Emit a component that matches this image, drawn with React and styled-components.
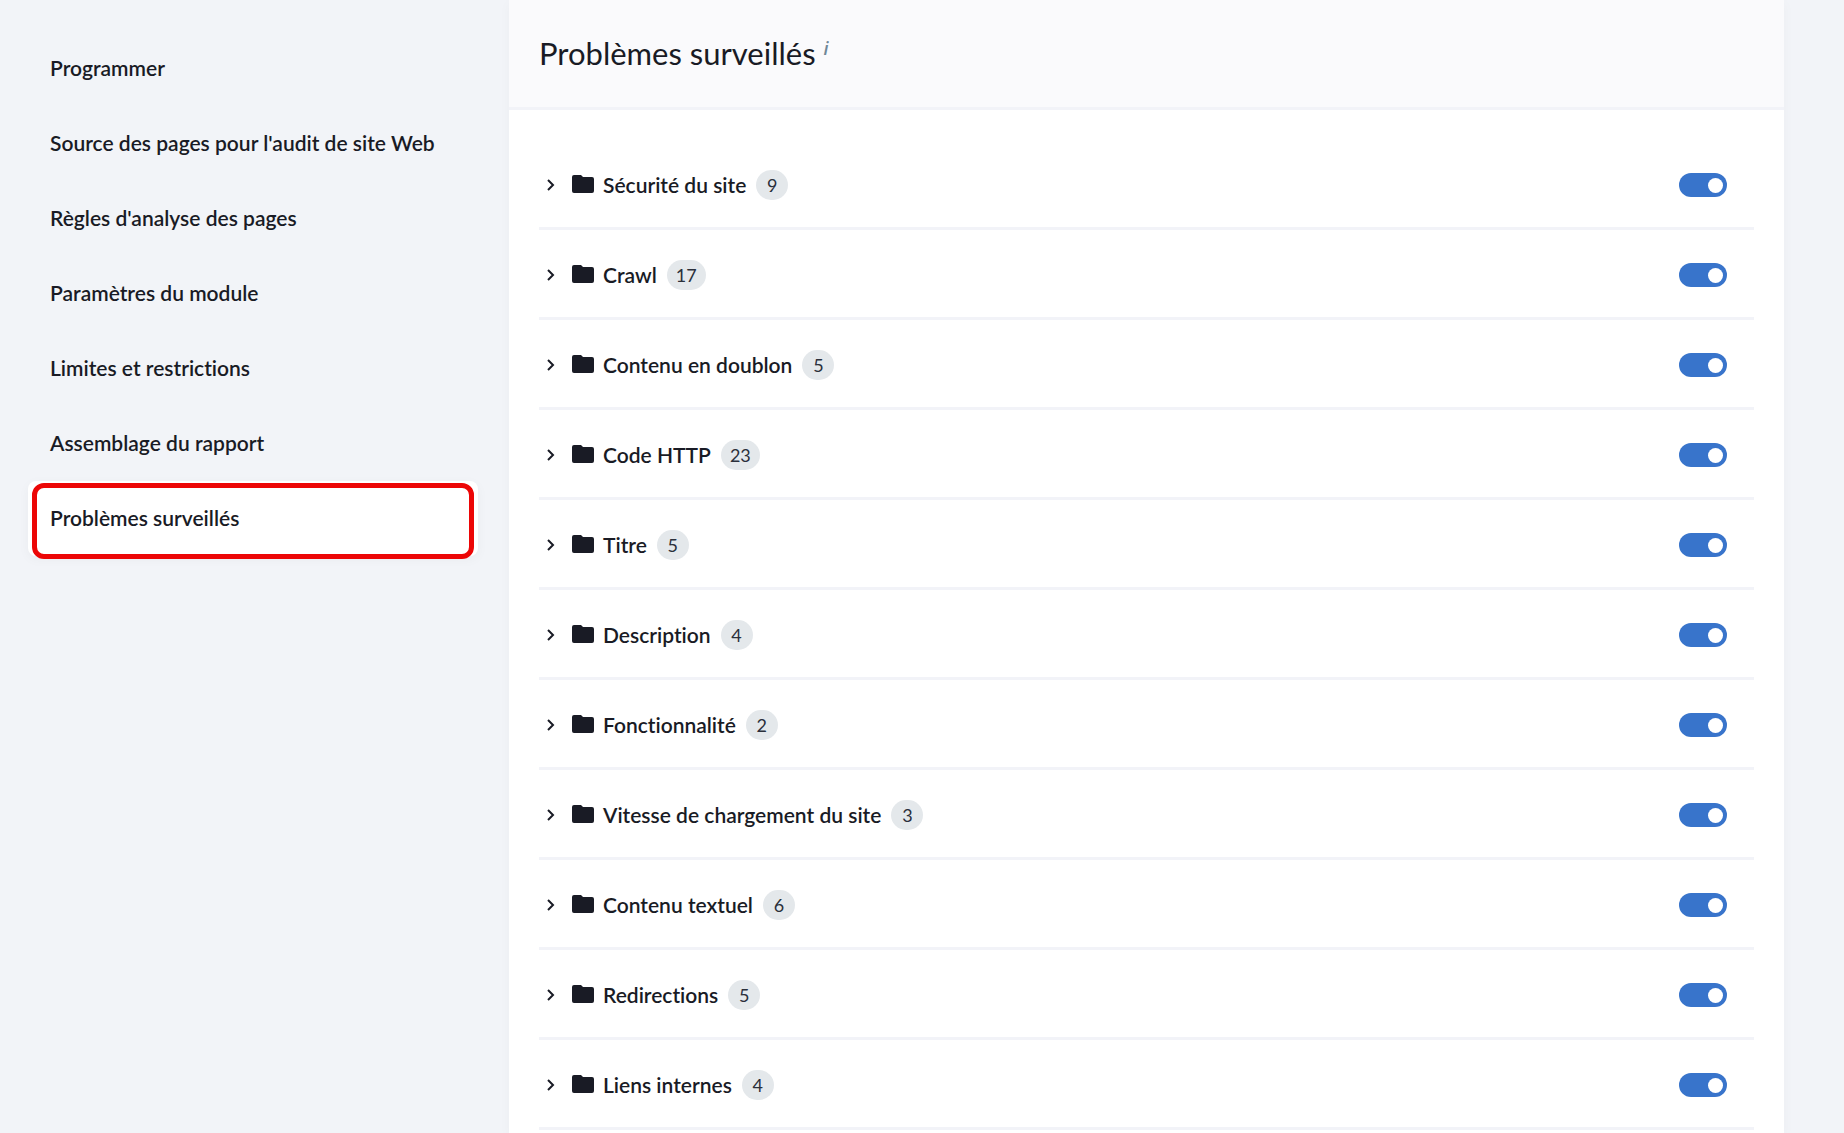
import React from "react";
import styled, { createGlobalStyle, css } from "styled-components";

const GlobalStyle = createGlobalStyle`
  *, *::before, *::after { box-sizing: border-box; }
  body {
    margin: 0;
    background: #f2f4f8;
    color: #191b25;
    font-family: Lato, "Noto Sans", sans-serif;
    font-size: 21px;
    font-variant-ligatures: none;
    line-height: 30px;
  }
`;

const Page = styled.div`
  display: flex;
  min-height: 100vh;
  padding-right: 60px;
`;

const Sidebar = styled.nav`
  flex: 0 0 509px;
  padding: 31px 31px 0 28px;
`;

const Menu = styled.ul`
  margin: 0;
  padding: 0;
  list-style: none;
`;

const MenuLink = styled.a`
  position: relative;
  display: flex;
  align-items: center;
  height: 75px;
  padding: 0 22px 2px;
  border-radius: 8px;
  color: inherit;
  font-weight: 600;
  text-decoration: none;

  ${({ $active }) =>
    $active &&
    css`
      background: #ffffff;
      box-shadow: 0 3px 12px rgba(25, 27, 37, 0.04);

      &::after {
        content: "";
        position: absolute;
        inset: 2px 4px -3px;
        border: 5px solid #ec0606;
        border-radius: 12px;
      }
    `}
`;

const Panel = styled.main`
  flex: 1;
  min-width: 0;
  background: #ffffff;
  box-shadow: 0 3px 12px rgba(25, 27, 37, 0.03);
`;

const PanelHeader = styled.header`
  display: flex;
  height: 110px;
  padding: 34px 30px 0;
  border-bottom: 3px solid #f2f3f8;
  background: #fafafc;
`;

const Title = styled.h1`
  margin: 0;
  font-size: 31px;
  font-weight: 400;
  line-height: 38px;
`;

const Hint = styled.button`
  align-self: flex-start;
  margin-left: 8px;
  padding: 0;
  border: 0;
  background: none;
  color: #6e8797;
  font: italic 600 18px/28px "Open Sans", sans-serif;
  cursor: help;
`;

const Groups = styled.ul`
  margin: 0;
  padding: 30px 30px 0;
  list-style: none;
`;

const Group = styled.li`
  display: flex;
  align-items: center;
  justify-content: space-between;
  height: 90px;
  padding: 3px 27px 0 0;
  border-bottom: 3px solid #f2f3f8;
`;

const Expander = styled.button`
  display: flex;
  align-items: center;
  padding: 0;
  border: 0;
  background: none;
  color: inherit;
  font: inherit;
  font-variant-ligatures: none;
  cursor: pointer;
`;

const Arrow = styled.svg`
  width: 24px;
  height: 24px;
`;

const Folder = styled.svg`
  width: 22px;
  height: 18px;
  margin: 0 9px 2px;
`;

const GroupName = styled.span`
  font-weight: 600;
`;

const Count = styled.span`
  min-width: 32px;
  height: 30px;
  margin-left: 10px;
  padding: 0 9px;
  border-radius: 15px;
  background: #e4e8eb;
  color: #2b303b;
  font-size: 18px;
  text-align: center;
`;

const Toggle = styled.input`
  appearance: none;
  display: flex;
  align-items: center;
  width: 48px;
  height: 24px;
  margin: 0;
  padding: 0 4px;
  border-radius: 12px;
  background: #b9c3cc;
  cursor: pointer;

  &::before {
    content: "";
    width: 15px;
    height: 15px;
    border-radius: 50%;
    background: #ffffff;
  }

  &:checked {
    justify-content: flex-end;
    background: #3874cb;
  }
`;

const sections = [
  "Programmer",
  "Source des pages pour l'audit de site Web",
  "Règles d'analyse des pages",
  "Paramètres du module",
  "Limites et restrictions",
  "Assemblage du rapport",
  "Problèmes surveillés",
];

const groups = [
  ["Sécurité du site", 9],
  ["Crawl", 17],
  ["Contenu en doublon", 5],
  ["Code HTTP", 23],
  ["Titre", 5],
  ["Description", 4],
  ["Fonctionnalité", 2],
  ["Vitesse de chargement du site", 3],
  ["Contenu textuel", 6],
  ["Redirections", 5],
  ["Liens internes", 4],
];

function IssueGroup({ id, name, count }) {
  return (
    <Group>
      <Expander type="button" aria-expanded="false">
        <Arrow viewBox="0 0 24 24" fill="none" stroke="currentColor" strokeWidth="2" aria-hidden="true">
          <path d="M9 7l5 5-5 5" />
        </Arrow>
        <Folder viewBox="0 0 22 18" fill="currentColor" aria-hidden="true">
          <path d="M2 0h7l2 2h9a2 2 0 0 1 2 2v12a2 2 0 0 1-2 2H2a2 2 0 0 1-2-2V2a2 2 0 0 1 2-2z" />
        </Folder>
        <GroupName id={id}>{name}</GroupName>
        <Count>{count}</Count>
      </Expander>
      <Toggle type="checkbox" role="switch" defaultChecked aria-labelledby={id} />
    </Group>
  );
}

export default function App() {
  const current = sections[sections.length - 1];
  return (
    <>
      <GlobalStyle />
      <Page>
        <Sidebar>
          <Menu>
            {sections.map((label) => (
              <li key={label}>
                <MenuLink
                  href="#"
                  $active={label === current}
                  aria-current={label === current ? "page" : undefined}
                >
                  {label}
                </MenuLink>
              </li>
            ))}
          </Menu>
        </Sidebar>
        <Panel>
          <PanelHeader>
            <Title>{current}</Title>
            <Hint type="button">i</Hint>
          </PanelHeader>
          <Groups>
            {groups.map(([name, count], index) => (
              <IssueGroup key={name} id={`group-${index}`} name={name} count={count} />
            ))}
          </Groups>
        </Panel>
      </Page>
    </>
  );
}
